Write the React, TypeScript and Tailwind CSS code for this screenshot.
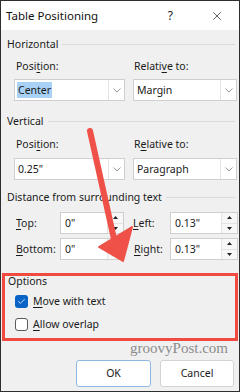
import { Check, X } from "lucide-react";

const font = { fontFamily: "'Segoe UI', 'Noto Sans', sans-serif" };

function GroupHeader({ label }: { label: string }) {
  return (
    <div className="flex h-[15px] items-center gap-[4px] pl-[6px] pr-[4px]">
      <span className="text-[10.5px] leading-[15px] text-[#1a1a1a]">{label}</span>
      <div className="h-px flex-1 bg-[#dadada]" />
    </div>
  );
}

function Chevron() {
  return (
    <svg width="8" height="5" viewBox="0 0 8 5" fill="none" className="mx-auto">
      <path d="M0.5 0.5 L4 4 L7.5 0.5" stroke="#8a8a8a" strokeWidth="0.9" />
    </svg>
  );
}

function Dropdown({ value, selected, width }: { value: string; selected?: boolean; width: string }) {
  return (
    <div className={`flex h-[22px] ${width} border border-[#cfcfcf] bg-white`}>
      <div className="flex flex-1 items-center pl-[2px]">
        <span
          className={`block h-[16px] px-[1px] text-[10.5px] leading-[16px] text-[#1a1a1a] ${selected ? "bg-[#a8d1f5]" : ""}`}
        >
          {value}
        </span>
      </div>
      <div className="flex w-[16px] items-center border-l border-[#e3e3e3]">
        <Chevron />
      </div>
    </div>
  );
}

function SpinBox({ value, width }: { value: string; width: string }) {
  return (
    <div className={`flex h-[22px] ${width} border border-[#cfcfcf] bg-white`}>
      <div className="flex flex-1 items-center pl-[4px] text-[10.5px] leading-[16px] text-[#1a1a1a]">{value}</div>
      <div className="flex w-[16px] flex-col border-l border-[#e3e3e3]">
        <div className="flex flex-1 items-center justify-center border-b border-[#e3e3e3] bg-[#f7f7f7]">
          <svg width="5" height="3" viewBox="0 0 5 3">
            <path d="M0 3 L2.5 0 L5 3 Z" fill="#222" />
          </svg>
        </div>
        <div className="flex flex-1 items-center justify-center bg-[#f7f7f7]">
          <svg width="5" height="3" viewBox="0 0 5 3">
            <path d="M0 0 L2.5 3 L5 0 Z" fill="#222" />
          </svg>
        </div>
      </div>
    </div>
  );
}

function Label({ text, u, className = "" }: { text: string; u: number; className?: string }) {
  return (
    <div className={`h-[15px] text-[10.5px] leading-[15px] text-[#1a1a1a] ${className}`}>
      {text.slice(0, u)}
      <span className="underline underline-offset-2">{text[u]}</span>
      {text.slice(u + 1)}
    </div>
  );
}

export default function App() {
  return (
    <div
      style={font}
      className="relative h-[392px] w-[240px] overflow-hidden border border-[#2e2e2e] bg-[#f0f0f0]"
    >
      <header className="flex h-[29px] items-center bg-white pl-[5px]">
        <span className="text-[11.5px] leading-[16px] text-[#111]">Table Positioning</span>
        <span className="ml-auto mr-[37px] text-[12px] leading-[16px] text-[#222]">?</span>
        <X size={14} strokeWidth={1.2} className="mr-[15px] text-[#222]" />
      </header>

      <div className="pt-[7px]">
        <GroupHeader label="Horizontal" />
        <div className="mt-[7px] flex gap-[8px] pl-[13px]">
          <div className="flex flex-col gap-[5px]">
            <Label text="Position:" u={4} className="pl-[2px]" />
            <Dropdown value="Center" selected width="w-[111px]" />
          </div>
          <div className="flex flex-col gap-[5px]">
            <Label text="Relative to:" u={6} className="pl-[1px]" />
            <Dropdown value="Margin" width="w-[104px]" />
          </div>
        </div>

        <div className="mt-[13px]">
          <GroupHeader label="Vertical" />
        </div>
        <div className="mt-[8px] flex gap-[8px] pl-[13px]">
          <div className="flex flex-col gap-[6px]">
            <Label text="Position:" u={4} className="pl-[2px]" />
            <Dropdown value={'0.25"'} width="w-[111px]" />
          </div>
          <div className="flex flex-col gap-[6px]">
            <Label text="Relative to:" u={1} className="pl-[1px]" />
            <Dropdown value="Paragraph" width="w-[104px]" />
          </div>
        </div>

        <div className="mt-[10px]">
          <GroupHeader label="Distance from surrounding text" />
        </div>
        <div className="mt-[7px] grid grid-cols-[44px_64px_46px_68px] items-center gap-y-[4px] pl-[15px]">
          <Label text="Top:" u={0} />
          <SpinBox value={'0"'} width="w-[64px]" />
          <Label text="Left:" u={0} className="pl-[9px]" />
          <SpinBox value={'0.13"'} width="w-[68px]" />
          <Label text="Bottom:" u={0} />
          <SpinBox value={'0"'} width="w-[64px]" />
          <Label text="Right:" u={0} className="pl-[10px]" />
          <SpinBox value={'0.13"'} width="w-[68px]" />
        </div>

        <section className="mx-[1px] mt-[13px] h-[68px] border-[3px] border-[#ef4b41]">
          <div className="h-[12px] pl-[3px] text-[10.5px] leading-[10px] text-[#1a1a1a]">Options</div>
          <div className="mt-[7px] flex flex-col gap-[10px] pl-[10px]">
            <div className="flex h-[13px] items-center gap-[5px]">
              <div className="flex h-[13px] w-[13px] items-center justify-center rounded-[3px] bg-[#0a64c8]">
                <Check size={9} strokeWidth={2} className="text-white" />
              </div>
              <Label text="Move with text" u={0} />
            </div>
            <div className="flex h-[13px] items-center gap-[5px]">
              <div className="h-[13px] w-[13px] rounded-[3px] border border-[#5a5a5a] bg-white" />
              <Label text="Allow overlap" u={0} />
            </div>
          </div>
        </section>

        <div className="mr-[11px] h-[16px] text-right font-['Liberation_Serif',serif] text-[15px] leading-[14px] text-[#8c8c8c]">
          groovyPost.com
        </div>
        <div className="mt-[3px] flex justify-end gap-[9px] pr-[5px]">
          <button className="h-[27px] w-[75px] rounded-[3px] border border-[#8fb8e3] bg-white text-[10.5px] text-[#1a1a1a]">
            OK
          </button>
          <button className="h-[27px] w-[74px] rounded-[3px] border border-[#d3d3d3] bg-white text-[10.5px] text-[#1a1a1a]">
            Cancel
          </button>
        </div>
      </div>

      <svg
        className="pointer-events-none absolute left-0 top-0"
        width="240"
        height="392"
        viewBox="0 0 240 392"
      >
        <line x1="89" y1="130" x2="113" y2="238" stroke="#ef5148" strokeWidth="6" strokeLinecap="round" />
        <path d="M98 246 L131 226 L122 260 Z" fill="#ef5148" stroke="#ef5148" strokeWidth="2" strokeLinejoin="round" />
      </svg>
    </div>
  );
}
